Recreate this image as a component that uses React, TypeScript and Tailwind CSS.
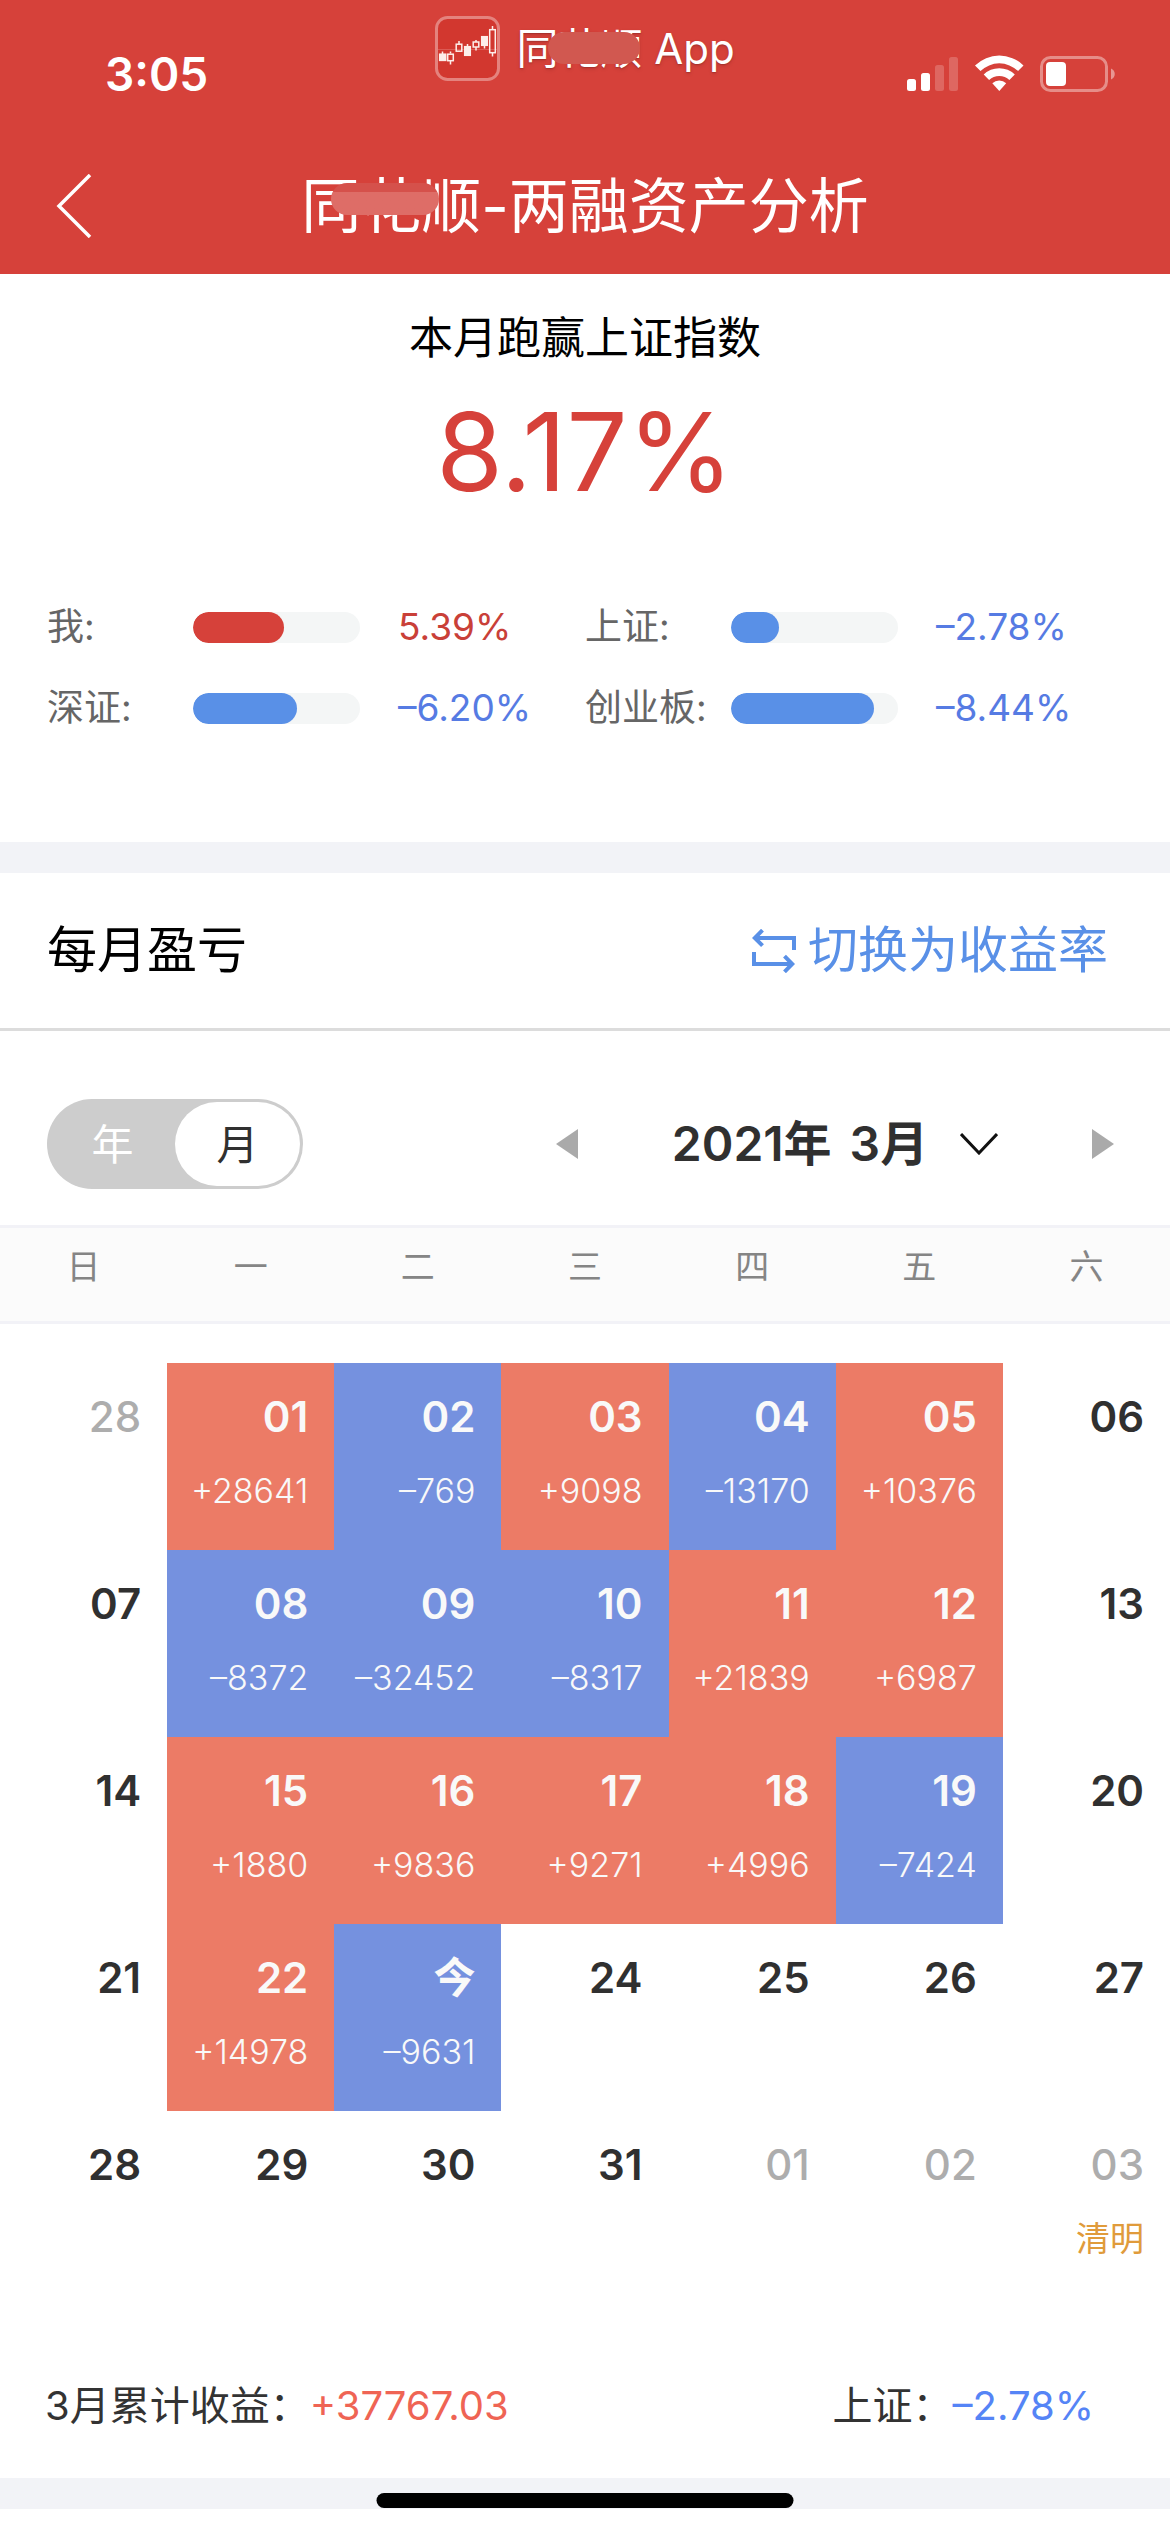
import React from 'react';

interface IndexStat {
  label: string;
  value: string;
  percent: number;
  up?: boolean;
}

interface CalendarDay {
  day: string;
  amount?: string;
  muted?: boolean;
  festival?: string;
}

const stats: IndexStat[] = [
  { label: '我:', value: '5.39%', percent: 54.5, up: true },
  { label: '上证:', value: '–2.78%', percent: 28.5 },
  { label: '深证:', value: '–6.20%', percent: 62.5 },
  { label: '创业板:', value: '–8.44%', percent: 85.5 },
];

const weekdays = ['日', '一', '二', '三', '四', '五', '六'];

const weeks: CalendarDay[][] = [
  [
    { day: '28', muted: true },
    { day: '01', amount: '+28641' },
    { day: '02', amount: '–769' },
    { day: '03', amount: '+9098' },
    { day: '04', amount: '–13170' },
    { day: '05', amount: '+10376' },
    { day: '06' },
  ],
  [
    { day: '07' },
    { day: '08', amount: '–8372' },
    { day: '09', amount: '–32452' },
    { day: '10', amount: '–8317' },
    { day: '11', amount: '+21839' },
    { day: '12', amount: '+6987' },
    { day: '13' },
  ],
  [
    { day: '14' },
    { day: '15', amount: '+1880' },
    { day: '16', amount: '+9836' },
    { day: '17', amount: '+9271' },
    { day: '18', amount: '+4996' },
    { day: '19', amount: '–7424' },
    { day: '20' },
  ],
  [
    { day: '21' },
    { day: '22', amount: '+14978' },
    { day: '今', amount: '–9631' },
    { day: '24' },
    { day: '25' },
    { day: '26' },
    { day: '27' },
  ],
  [
    { day: '28' },
    { day: '29' },
    { day: '30' },
    { day: '31' },
    { day: '01', muted: true },
    { day: '02', muted: true },
    { day: '03', muted: true, festival: '清明' },
  ],
];

const CandleLogo = () => (
  <svg viewBox="0 0 65 65" className="size-[65px]" fill="none">
    <rect x="1.5" y="1.5" width="62" height="62" rx="11" fill="#d2372f" stroke="#e4837e" strokeWidth="3" />
    <path d="M3 33.500h59" stroke="#dc5a54" strokeWidth="1" />
    <g stroke="#fdeeea" strokeWidth="1.500">
      <path d="M7.500 35.500v3M15.500 35.500v2M15.500 45v3.500M24 25v3M32.500 28v3M41 24v2M41 31v3.500M49.500 30v2.500M57.500 10v4M57.500 37v3.500" />
      <rect x="4.700" y="38.200" width="6" height="6.200" fill="#fdeeea" />
      <rect x="12.700" y="38.200" width="5.600" height="6.500" />
      <rect x="21.200" y="28.200" width="5.600" height="7" />
      <rect x="29.700" y="30.700" width="5.600" height="8.600" fill="#fdeeea" />
      <rect x="38.200" y="26" width="5.600" height="5" />
      <rect x="46.700" y="20.700" width="5.600" height="8.600" fill="#fdeeea" />
      <rect x="54.700" y="13.700" width="5.600" height="23" />
    </g>
  </svg>
);

const StatusIcons = () => (
  <svg viewBox="0 0 209 40" className="h-10 w-[209px]" fill="#fff">
    <rect x="0" y="24" width="9" height="12" rx="2.500" />
    <rect x="14" y="18" width="9" height="18" rx="2.500" />
    <rect x="28" y="10" width="9" height="26" rx="2.500" opacity=".2" />
    <rect x="42" y="2" width="9" height="34" rx="2.500" opacity=".2" />
    <path d="M68 10.500a34.500 34.500 0 0 1 48.500 0l-5.500 5.600a26.600 26.600 0 0 0-37.500 0z" />
    <path d="M76.700 19.500a22.200 22.200 0 0 1 31.100 0l-5.400 5.500a14.600 14.600 0 0 0-20.300 0z" />
    <path d="M85.300 28.300a10 10 0 0 1 13.900 0L92.300 36z" />
    <rect x="134.500" y="2.500" width="65" height="33" rx="9" fill="none" stroke="#fff" strokeWidth="3" opacity=".4" />
    <rect x="139" y="7" width="20" height="24" rx="4" />
    <path d="M204 13.500c5 2 5 9 0 11z" opacity=".45" />
  </svg>
);

const SwapIcon = () => (
  <svg viewBox="0 0 44 44" className="size-11" fill="none" stroke="currentColor" strokeWidth="4">
    <path d="M10.500 1.200L2.800 9l7.700 7.700M3 9h39v12" />
    <path d="M32.500 27.200l7.700 7.800-7.700 7.800M41 35H2V23" />
  </svg>
);

const StatRow: React.FC<{ stat: IndexStat }> = ({ stat }) => (
  <div className="flex items-center text-[37px]">
    <dt className="w-[146px] text-[#666]">{stat.label}</dt>
    <dd className="flex items-center gap-[38px]">
      <div className="h-[31px] w-[167px] overflow-hidden rounded-full bg-[#f4f6f6]">
        <div
          className={`h-full rounded-full ${stat.up ? 'bg-[#d6413a]' : 'bg-[#5990e7]'}`}
          style={{ width: `${stat.percent}%` }}
        />
      </div>
      <span className={stat.up ? 'text-[#c94038]' : 'text-[#567be3]'}>{stat.value}</span>
    </dd>
  </div>
);

const dayColor = ({ amount, muted }: CalendarDay) => {
  if (amount) {
    return amount.startsWith('+') ? 'bg-[#ec7b66] text-[#f9f9f9]' : 'bg-[#7591df] text-[#f9f9f9]';
  }
  return muted ? 'text-[#adadad]' : 'text-[#303030]';
};

const DayCell: React.FC<{ item: CalendarDay }> = ({ item }) => (
  <td className={`h-[187px] pt-6 pr-[26px] text-right align-top ${dayColor(item)}`}>
    <div className={`text-[42px] leading-[60px] ${item.muted ? 'font-medium' : 'font-semibold'}`}>{item.day}</div>
    {item.amount && <div className="pt-4 text-[34px] leading-[56px] font-light">{item.amount}</div>}
    {item.festival && <div className="pt-4 text-[34px] leading-[56px] text-[#e09b3b]">{item.festival}</div>}
  </td>
);

const App: React.FC = () => {
  return (
    <div className="min-h-screen bg-white font-['Inter','Noto_Sans_CJK_SC',sans-serif] text-black">
      <header className="bg-[#d6413a] text-white">
        <div className="grid h-[142px] grid-cols-[1fr_auto_1fr] items-start">
          <div className="pt-11 pl-[105px] text-[46px] leading-[60px] font-semibold">3:05</div>
          <div className="flex items-center gap-4 pt-4">
            <CandleLogo />
            <div className="relative text-[42px] leading-[65px] text-shadow-md">
              同花顺 App
              <span className="absolute top-4 left-8 h-8 w-[92px] rounded-2xl bg-[#d15850]" />
            </div>
          </div>
          <div className="flex justify-end pt-[55px] pr-[54px]">
            <StatusIcons />
          </div>
        </div>
        <div className="grid h-[132px] grid-cols-[1fr_auto_1fr] items-center pb-1">
          <button type="button" aria-label="返回" className="ml-14 w-9">
            <svg viewBox="0 0 36 64" className="h-16 w-9" fill="none" stroke="currentColor" strokeWidth="3.500">
              <path d="M34 1L3 32l31 31" />
            </svg>
          </button>
          <h1 className="relative text-[60px] leading-[90px]">
            同花顺-两融资产分析
            <span className="absolute top-[22px] left-[30px] h-8 w-[108px] rounded-2xl bg-linear-to-b from-[#d5514b] from-28% to-[#de6d67] to-28%" />
          </h1>
        </div>
      </header>

      <section className="h-[568px] pt-8 text-center">
        <p className="text-[44px] leading-[64px]">本月跑赢上证指数</p>
        <p className="pt-4 text-[108px] leading-[132px] text-[#d6413a]">8.17%</p>
        <dl className="grid grid-cols-2 gap-y-[17px] px-[47px] pt-[77px] text-left leading-[64px]">
          {stats.map((stat) => (
            <StatRow key={stat.label} stat={stat} />
          ))}
        </dl>
      </section>

      <section className="border-t-[31px] border-[#f2f3f7]">
        <div className="flex h-[158px] items-center justify-between border-b-[3px] border-[#dcdcdc] pr-[62px] pl-[47px] text-[50px]">
          <h2>每月盈亏</h2>
          <button type="button" className="flex items-center gap-3 text-[#5990e7]">
            <SwapIcon />
            切换为收益率
          </button>
        </div>

        <div className="flex h-[194px] items-center justify-between pt-8 pr-14 pl-[47px]">
          <div className="flex h-[90px] w-64 rounded-full bg-[#cdcdcd] p-[3px] text-[42px]">
            <button type="button" aria-pressed="false" className="flex-1 text-white">
              年
            </button>
            <button type="button" aria-pressed="true" className="flex-1 rounded-full bg-white text-[#303030]">
              月
            </button>
          </div>
          <div className="flex w-[558px] items-center justify-between">
            <button type="button" aria-label="上个月">
              <svg viewBox="0 0 22 30" className="h-[30px] w-[22px]" fill="#aaa">
                <path d="M22 0v30L0 15z" />
              </svg>
            </button>
            <button type="button" className="flex items-center gap-8 text-[48px] font-semibold text-[#303030]">
              <span className="flex gap-[18px]">
                <span>2021年</span>
                <span>3月</span>
              </span>
              <svg viewBox="0 0 38 22" className="h-[22px] w-[38px]" fill="none" stroke="#111" strokeWidth="3">
                <path d="M1 1l18 19L37 1" />
              </svg>
            </button>
            <button type="button" aria-label="下个月">
              <svg viewBox="0 0 22 30" className="h-[30px] w-[22px]" fill="#aaa">
                <path d="M0 0v30l22-15z" />
              </svg>
            </button>
          </div>
        </div>

        <table className="w-full table-fixed border-collapse">
          <thead>
            <tr className="h-24 border-y-[3px] border-[#f2f2f7] bg-[#fbfbfb]">
              {weekdays.map((name) => (
                <th key={name} className="pb-4 text-[34px] font-normal text-[#858585]">
                  {name}
                </th>
              ))}
            </tr>
          </thead>
          <tbody className="before:block before:h-[39px] before:content-['']">
            {weeks.map((week, i) => (
              <tr key={i}>
                {week.map((item) => (
                  <DayCell key={item.day} item={item} />
                ))}
              </tr>
            ))}
          </tbody>
        </table>

        <div className="flex h-[180px] items-center justify-between pt-9 pr-[76px] pl-[45px] text-[40px] text-[#333]">
          <p>
            3月累计收益：<span className="text-[#ef6454]">+37767.03</span>
          </p>
          <p>
            上证：<span className="text-[#5584f6]">–2.78%</span>
          </p>
        </div>
      </section>

      <div className="h-[31px] bg-[#f2f3f7]" />
      <div className="fixed bottom-6 left-1/2 h-[15px] w-[417px] -translate-x-1/2 rounded-full bg-black" />
    </div>
  );
};

export default App;
